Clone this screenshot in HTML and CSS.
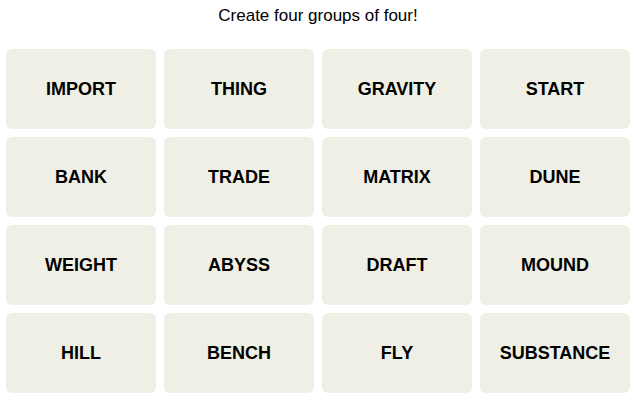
FILE: index.html
```html
<!DOCTYPE html>
<html>
<head>
<meta charset="utf-8">
<link rel="stylesheet" href="styles.css">
</head>
<body>
<main class="game">
  <p class="prompt">Create four groups of four!</p>
  <div class="board">
    <button class="tile">IMPORT</button>
    <button class="tile">THING</button>
    <button class="tile">GRAVITY</button>
    <button class="tile">START</button>
    <button class="tile">BANK</button>
    <button class="tile">TRADE</button>
    <button class="tile">MATRIX</button>
    <button class="tile">DUNE</button>
    <button class="tile">WEIGHT</button>
    <button class="tile">ABYSS</button>
    <button class="tile">DRAFT</button>
    <button class="tile">MOUND</button>
    <button class="tile">HILL</button>
    <button class="tile">BENCH</button>
    <button class="tile">FLY</button>
    <button class="tile">SUBSTANCE</button>
  </div>
</main>
</body>
</html>
```
FILE: styles.css
```css
html, body {
  margin: 0;
  padding: 0;
  background: #ffffff;
}
.game {
  padding: 0 6px;
  font-family: "Liberation Sans", Arial, sans-serif;
  color: #000;
}
.prompt {
  margin: 0;
  height: 49px;
  padding-top: 6px;
  box-sizing: border-box;
  font-size: 17px;
  line-height: 20px;
  text-align: center;
}
.board {
  display: grid;
  grid-template-columns: repeat(4, 150px);
  grid-auto-rows: 80px;
  gap: 8px;
}
.tile {
  border: none;
  border-radius: 6px;
  background: #efefe6;
  font-family: "Liberation Sans", Arial, sans-serif;
  font-weight: 700;
  font-size: 18px;
  color: #000;
  padding: 0;
  text-transform: uppercase;
}
```
